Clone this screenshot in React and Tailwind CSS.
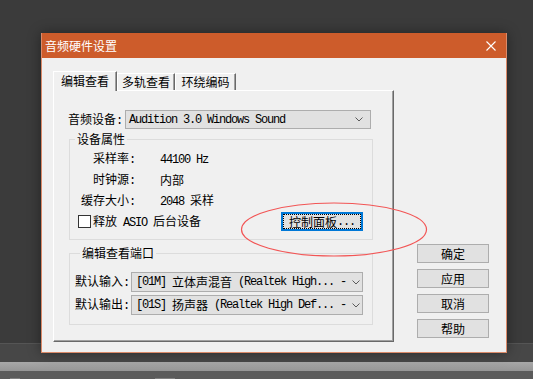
import React from 'react';

const CJK = "font-[family-name:Noto_Sans_CJK_SC,Noto_Sans_CJK_JP,sans-serif]";
const MONO = "font-[family-name:Liberation_Mono,monospace] text-[12px] tracking-[-1.2px]";

// SimSun-like: ASCII half width, CJK full width
const Mixed = ({ text }) =>
  text
    .split(/([ -~]+)/)
    .filter(Boolean)
    .map((part, i) =>
      /^[ -~]+$/.test(part) ? (
        <span key={i} className={MONO}>
          {part}
        </span>
      ) : (
        <span key={i}>{part}</span>
      )
    );

const Chevron = () => (
  <svg width="8" height="5" viewBox="0 0 8 5" className="shrink-0">
    <path d="M0.5 0.5 L4 4 L7.5 0.5" stroke="#5a5a5a" strokeWidth="1" fill="none" />
  </svg>
);

const Select = ({ text, className = '' }) => (
  <div
    className={`flex items-center justify-between bg-[#e1e1e1] border border-[#adadad] text-black whitespace-pre ${className}`}
  >
    <span className="flex items-center">
      <Mixed text={text} />
    </span>
    <Chevron />
  </div>
);

const SideButton = ({ label }) => (
  <button className="w-[72px] h-[19px] bg-[#e1e1e1] border border-[#adadad] flex items-center justify-center text-black">
    {label}
  </button>
);

const Tab = ({ label, active, width }) =>
  active ? (
    <div
      className={`${width} h-[20px] -mb-px relative z-10 bg-[#f0f0f0] border-l border-t border-white border-r border-r-[#696969] shadow-[inset_-1px_0_0_#a0a0a0] flex items-start justify-center pt-[1px]`}
    >
      {label}
    </div>
  ) : (
    <div
      className={`${width} h-[17px] bg-[#f0f0f0] border-l border-t border-white border-r border-r-[#696969] shadow-[inset_-1px_0_0_#a0a0a0] flex items-center justify-center`}
    >
      {label}
    </div>
  );

const InfoRow = ({ label, value, h }) => (
  <div className={`flex items-center ${h}`}>
    <div className="w-[65px] text-right whitespace-pre">
      <Mixed text={label} />
    </div>
    <div className="ml-[25px] whitespace-pre">
      <Mixed text={value} />
    </div>
  </div>
);

export default function App() {
  return (
    <div className={`relative w-[533px] h-[379px] overflow-hidden ${CJK} text-[12px] leading-[16px]`}>
      {/* desktop background */}
      <div className="flex flex-col h-full">
        <div className="h-[343px] bg-[#3b3b3b]" />
        <div className="h-[19px] bg-[#474747] border-t border-[#555555]" />
        <div className="h-[9px] bg-gradient-to-b from-[#a8a8a8] to-[#959595]" />
        <div className="flex-1 bg-[#5b5b5b] flex items-end">
          <div className="ml-[10px] w-[10px] h-[1px] bg-[#808080]" />
          <div className="ml-[135px] w-[20px] h-[1px] bg-[#808080]" />
        </div>
      </div>

      {/* dialog window */}
      <div className="absolute left-[41px] top-[33px] w-[466px] h-[320px] flex flex-col border border-[#db8a69] bg-[#f0f0f0] shadow-[0_0_12px_rgba(0,0,0,0.4)]">
        <div className="h-[25px] -mt-px bg-[#cd5c2b] flex items-center justify-between pl-[3px] pr-[10px]">
          <span className="text-white">音频硬件设置</span>
          <svg width="10" height="10" viewBox="0 0 10 10">
            <path d="M0.5 0.5 L9.5 9.5 M9.5 0.5 L0.5 9.5" stroke="#ffffff" strokeWidth="1.1" />
          </svg>
        </div>

        <div className="flex pl-[11px] pt-[13px]">
          {/* tab control */}
          <div className="w-[341px] flex flex-col">
            <div className="h-[19px] flex items-end">
              <Tab label="编辑查看" active width="w-[64px]" />
              <Tab label="多轨查看" width="w-[58px]" />
              <Tab label="环绕编码" width="w-[61px]" />
            </div>
            <div className="h-[252px] border-l border-t border-white border-r border-b border-r-[#696969] border-b-[#696969] shadow-[inset_-1px_-1px_0_#a0a0a0] pl-[14px] pt-[19px] flex flex-col">
              <div className="flex items-center">
                <div className="w-[54px] whitespace-pre">
                  <Mixed text="音频设备:" />
                </div>
                <Select text="Audition 3.0 Windows Sound" className="ml-[3px] w-[246px] h-[19px] pl-[3px] pr-[7px]" />
              </div>

              <fieldset className="mt-[2px] ml-[1px] w-[304px] border border-[#dcdcdc] pt-[2px] pb-[7px]">
                <legend className="ml-[5px] px-[2px]">设备属性</legend>
                <InfoRow label="采样率:" value="44100 Hz" h="h-[20px]" />
                <InfoRow label="时钟源:" value="内部" h="h-[21px]" />
                <InfoRow label="缓存大小:" value="2048 采样" h="h-[21px]" />
                <div className="flex items-center h-[21px] pl-[8px] pr-[9px]">
                  <div className="w-[13px] h-[13px] border border-[#333333] bg-white" />
                  <span className="ml-[2px] whitespace-pre">
                    <Mixed text="释放 ASIO 后台设备" />
                  </span>
                  <button className="ml-auto w-[82px] h-[19px] border-2 border-[#0078d7] bg-[#e1e1e1] p-0">
                    <span className="w-full h-full border border-dotted border-black flex items-center justify-center whitespace-pre">
                      <Mixed text="控制面板..." />
                    </span>
                  </button>
                </div>
              </fieldset>

              <fieldset className="mt-[5px] ml-[1px] w-[304px] border border-[#dcdcdc] pt-[11px] pb-[9px] pl-[5px] flex flex-col gap-[3px]">
                <legend className="ml-[5px] px-[2px]">编辑查看端口</legend>
                <div className="flex items-center">
                  <div className="w-[54px] whitespace-pre">
                    <Mixed text="默认输入:" />
                  </div>
                  <Select
                    text="[01M] 立体声混音 (Realtek High... - "
                    className="ml-[2px] w-[232px] h-[20px] pl-[4px] pr-[5px]"
                  />
                </div>
                <div className="flex items-center">
                  <div className="w-[54px] whitespace-pre">
                    <Mixed text="默认输出:" />
                  </div>
                  <Select
                    text="[01S] 扬声器 (Realtek High Def... - "
                    className="ml-[2px] w-[232px] h-[20px] pl-[4px] pr-[5px]"
                  />
                </div>
              </fieldset>
            </div>
          </div>

          {/* action buttons */}
          <div className="ml-[23px] mt-[173px] flex flex-col gap-[6px]">
            <SideButton label="确定" />
            <SideButton label="应用" />
            <SideButton label="取消" />
            <SideButton label="帮助" />
          </div>
        </div>
      </div>

      {/* red annotation ellipse */}
      <svg className="absolute left-[240px] top-[202px]" width="188" height="56" viewBox="0 0 188 56">
        <ellipse cx="94" cy="27.5" rx="92.5" ry="26.5" fill="none" stroke="#f25555" strokeWidth="1.2" />
      </svg>
    </div>
  );
}
